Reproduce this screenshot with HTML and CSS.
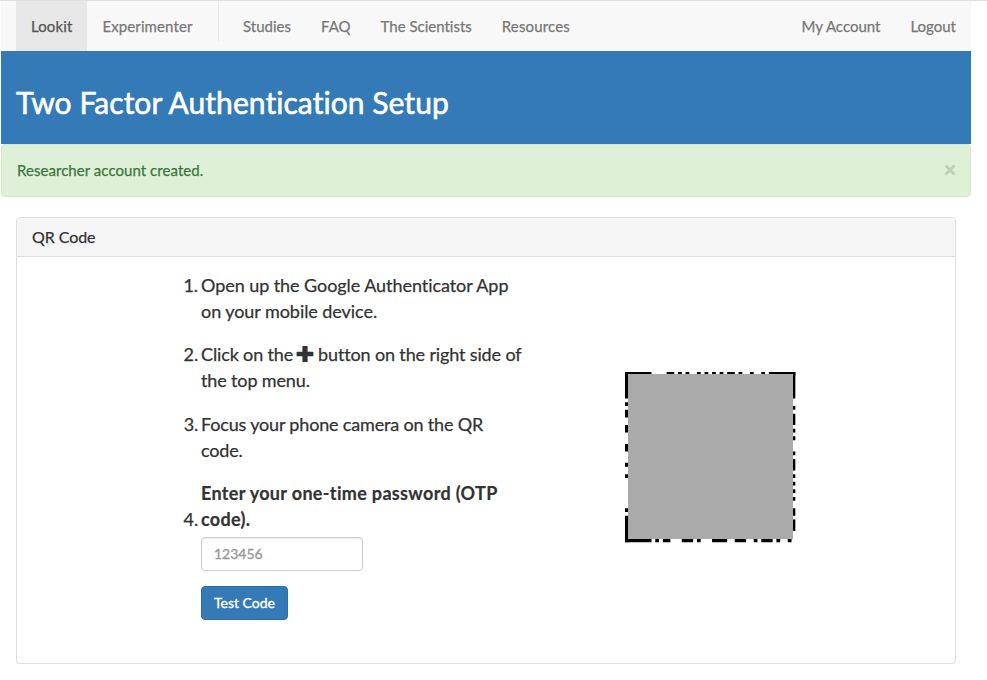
FILE: index.html
```html
<!DOCTYPE html>
<html lang="en">
<head>
<meta charset="utf-8">
<title>Two Factor Authentication Setup</title>
<link rel="stylesheet" href="styles.css">
</head>
<body>
<div class="page">
  <nav class="navbar">
    <a class="nav-link active">Lookit</a>
    <a class="nav-link experimenter">Experimenter</a>
    <span class="divider"></span>
    <a class="nav-link">Studies</a>
    <a class="nav-link">FAQ</a>
    <a class="nav-link">The Scientists</a>
    <a class="nav-link resources">Resources</a>
    <span class="spacer"></span>
    <a class="nav-link">My Account</a>
    <a class="nav-link">Logout</a>
  </nav>
  <header class="banner"><h1>Two Factor Authentication Setup</h1></header>
  <div class="alert">
    <span>Researcher account created.</span>
    <button class="close" aria-label="Close"><svg width="12" height="12" viewBox="0 0 12 12"><path d="M1.5 1.5 10.5 10.5M10.5 1.5 1.5 10.5"/></svg></button>
  </div>
  <section class="panel">
    <div class="panel-heading">QR Code</div>
    <div class="panel-body">
      <ol class="steps">
        <li class="first"><span class="num">1.</span><div>Open up the Google Authenticator App<br>on your mobile device.</div></li>
        <li><span class="num">2.</span><div>Click on the <svg class="plus" width="18" height="18" viewBox="0 0 18 18"><path d="M7 1h4q.6 0 .6.6V6.7h5.2q.6 0 .6.6v3.4q0 .6-.6.6h-5.2v5.1q0 .6-.6.6H7q-.6 0-.6-.6v-5.1H1.2q-.6 0-.6-.6V7.300q0-.6.6-.6h5.200V1.600Q6.400 1 7 1z"/></svg> button on the right side of<br>the top menu.</div></li>
        <li class="third"><span class="num">3.</span><div>Focus your phone camera on the QR<br>code.</div></li>
        <li><span class="num last">4.</span><form>
          <label for="otp">Enter your one-time password (OTP<br>code).</label>
          <input id="otp" type="text" placeholder="123456">
          <button type="button" class="btn">Test Code</button>
        </form></li>
      </ol>
      <svg class="qr" width="171" height="171" viewBox="0 0 171 171">
        <g transform="scale(3.785)">
          <path d="M0 0h7v1H0zM11 0h2v1h-2zM14 0h1v1h-1zM16 0h1v1h-1zM19 0h1v1h-1zM21 0h1v1h-1zM23 0h1v1h-1zM25 0h1v1h-1zM27 0h2v1h-2zM30 0h1v1h-1zM33 0h1v1h-1zM36 0h1v1h-1zM38 0h7v1h-7z"/>
          <path d="M0 0h1v7H0zM0 8h1v1H0zM0 10h1v2H0zM0 14h1v2H0zM0 19h1v2H0zM0 24h1v1H0zM0 27h1v1H0zM0 36h1v1H0zM0 38h1v7H0z"/>
          <path d="M44 0h1v7h-1zM44 9h1v1h-1zM44 11h1v3h-1zM44 15h1v1h-1zM44 17h1v1h-1zM44 21h1v1h-1zM44 23h1v3h-1zM44 27h1v1h-1zM44 29h1v1h-1zM44 31h1v1h-1zM44 33h1v1h-1zM44 36h1v2h-1zM44 39h1v3h-1z"/>
          <path d="M0 44h7v1H0zM8 44h1v1H8zM10 44h2v1h-2zM15 44h3v1h-3zM19 44h1v1h-1zM23 44h4v1h-4zM29 44h3v1h-3zM34 44h1v1h-1zM36 44h3v1h-3zM40 44h1v1h-1zM43 44h1v1h-1z"/>
        </g>
        <rect class="mask" x="3" y="2" width="165" height="165"/>
      </svg>
    </div>
  </section>
</div>
</body>
</html>
```
FILE: styles.css
```css
* { box-sizing: border-box; }
body {
  margin: 0;
  border-top: 1px solid #e0e0e0;
  background: #fff;
  color: #333;
  font: 15px/1.42857 Lato, sans-serif;
  font-variant-ligatures: none;
  -webkit-text-stroke: .25px;
}
.page { width: 970px; margin-left: 1px; }
.navbar {
  display: flex;
  height: 50px;
  padding-left: 15px;
  background: #f8f8f8;
}
.nav-link { padding: 15px; line-height: 21px; color: #777; white-space: nowrap; }
.nav-link.active { width: 71px; background: #e7e7e7; color: #555; letter-spacing: .1px; }
.experimenter { padding-left: 15.5px; letter-spacing: .1px; }
.resources { letter-spacing: .15px; }
.divider { width: 1px; height: 40px; margin: 0 9px 0 10.6px; background: #e7e7e7; }
.spacer { flex: 1; }
.banner { height: 93px; padding: 34px 15px 0; background: #337ab7; color: #fff; }
h1 { margin: 0; font-size: 30px; line-height: 34px; font-weight: 400; letter-spacing: .06px; -webkit-text-stroke: .6px; }
.alert {
  display: flex;
  justify-content: space-between;
  height: 53px;
  padding: 15px 14px 15px 15px;
  border: 1px solid #d6e9c6;
  border-radius: 4px;
  background: #dff0d8;
  color: #3c763d;
  letter-spacing: .05px;
}
.close { height: 20px; padding: 0; border: 0; background: none; }
.close svg { display: block; stroke: #bcd3b7; stroke-width: 2.8; }
.panel {
  height: 447px;
  margin: 20px 15px 0;
  border: 1px solid #ddd;
  border-radius: 4px;
  box-shadow: 0 1px 1px rgba(0, 0, 0, .05);
}
.panel-heading {
  height: 39px;
  padding: 8px 15px;
  border-bottom: 1px solid #ddd;
  border-radius: 3px 3px 0 0;
  background: #f5f5f5;
  font-size: 16px;
  line-height: 21px;
  letter-spacing: -.08px;
}
.panel-body { display: flex; padding: 16px 0 0 160px; }
.steps { width: 448px; margin: 0; padding: 0; list-style: none; font-size: 18px; line-height: 25.7px; letter-spacing: -.14px; }
.steps .first { letter-spacing: -.06px; }
.steps .third { letter-spacing: -.17px; }
.steps li { display: flex; margin-bottom: 18px; white-space: nowrap; }
.num { width: 24px; padding-right: 3px; text-align: right; }
.num.last { padding-top: 25.7px; }
.plus { fill: #333; stroke: none; vertical-align: -2px; margin: 0 0 0 -2px; }
label { display: block; margin-bottom: 4px; font-weight: 700; letter-spacing: .33px; -webkit-text-stroke: .2px; }
input, .btn { display: block; height: 34px; border-radius: 4px; font: 14px/20px Lato, sans-serif; padding: 6px 12px; -webkit-text-stroke: .35px; }
input { width: 162px; border: 1px solid #ccc; box-shadow: inset 0 1px 1px rgba(0, 0, 0, .075); }
input::placeholder { color: #999; opacity: 1; }
.btn { margin-top: 15px; border: 1px solid #2e6da4; background: #337ab7; color: #fff; }
.qr { margin-top: 99px; }
.mask { fill: #aaa; }
```
